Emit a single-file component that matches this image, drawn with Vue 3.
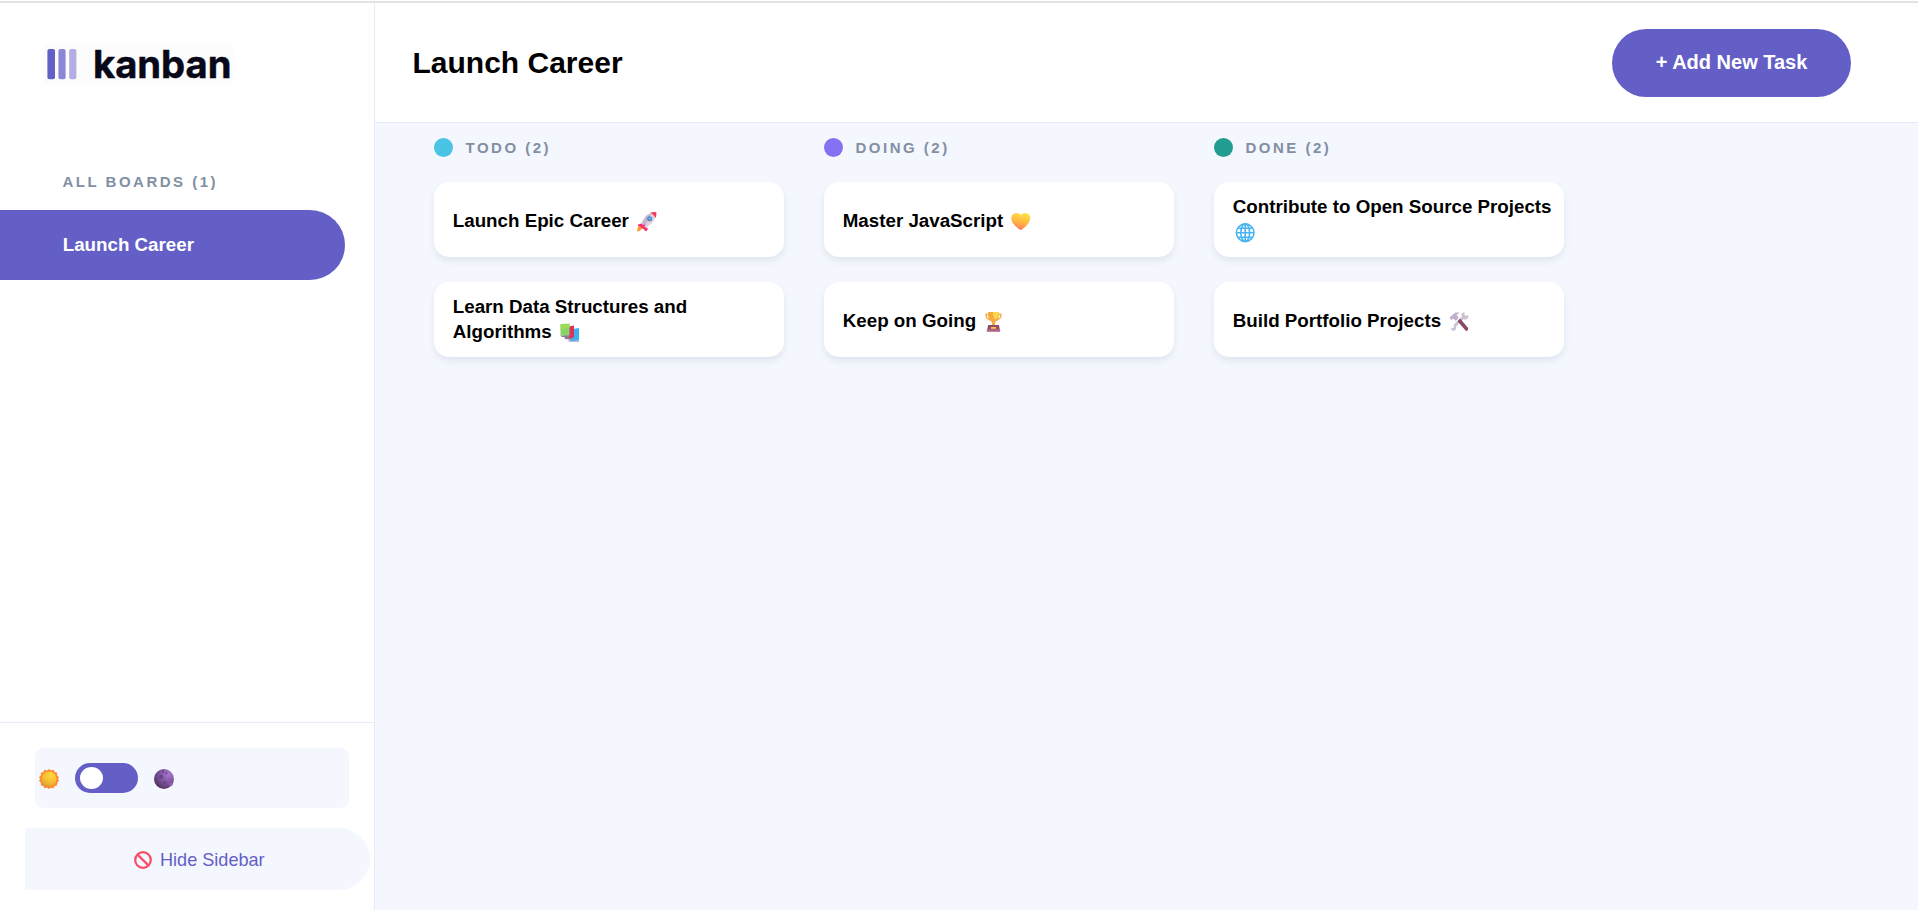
<script setup>
const boards = ['Launch Career']
const columns = [
  { name: 'TODO', color: '#49c4e5', tasks: [
    { title: 'Launch Epic Career', icon: 'rocket' },
    { title: 'Learn Data Structures and Algorithms', icon: 'books', wide: true }
  ] },
  { name: 'DOING', color: '#8471f2', tasks: [
    { title: 'Master JavaScript', icon: 'heart' },
    { title: 'Keep on Going', icon: 'trophy' }
  ] },
  { name: 'DONE', color: '#219c90', tasks: [
    { title: 'Contribute to Open Source Projects', icon: 'globe', wide: true },
    { title: 'Build Portfolio Projects', icon: 'tools' }
  ] }
]
</script>

<template>
  <div class="app">
    <div class="topline"></div>
    <div class="body">
      <aside class="sidebar">
        <svg class="logo" width="190" height="41" viewBox="0 0 190 41">
          <rect width="190" height="41" fill="#fcfcfc" />
          <rect x="4.4" y="5" width="7.6" height="30.3" rx="2" fill="#635fc7" />
          <rect x="15.4" y="5" width="7.2" height="30.3" rx="2" fill="#8b87d6" />
          <rect x="26.2" y="5" width="7.2" height="30.3" rx="2" fill="#b1aee3" />
          <text class="wordmark" x="50" y="33.600" textLength="138.500" lengthAdjust="spacingAndGlyphs">kanban</text>
        </svg>
        <h3 class="label boards-label">ALL BOARDS ({{ boards.length }})</h3>
        <nav>
          <button v-for="b in boards" :key="b" class="board">{{ b }}</button>
        </nav>
        <div class="side-bottom">
          <div class="theme">
            <svg class="sun" width="20" height="20" viewBox="0 0 20 20">
              <defs>
                <radialGradient id="sun" cx=".65" cy=".2" r=".9"><stop offset="0" stop-color="#ffd93f" /><stop offset=".6" stop-color="#f5bb32" /><stop offset="1" stop-color="#cf9a38" /></radialGradient>
              </defs>
              <path fill="#ff8b2e" d="M10 0l2 1.5 2.6-.7 1 2.2 2.5.7v2.5L20 8.3 19.1 10l.9 2-1.8 1.8-.1 2.6-2.5.7-1.2 2.2-2.5-.6L10 20l-2-1.3-2.5.6-1.1-2.2-2.5-.7-.1-2.6L.1 12l.9-2-.9-1.8 1.8-2V3.700l2.5-.7 1-2.2 2.600.7z" />
              <circle cx="10" cy="10" r="7.6" fill="url(#sun)" />
            </svg>
            <div class="switch"><span class="knob"></span></div>
            <svg class="moon" width="20" height="20" viewBox="0 0 20 20">
              <defs>
                <radialGradient id="moon" cx=".72" cy=".25" r=".85"><stop offset="0" stop-color="#a878cd" /><stop offset=".5" stop-color="#8055a2" /><stop offset="1" stop-color="#4c3158" /></radialGradient>
              </defs>
              <circle cx="10" cy="10" r="10" fill="url(#moon)" />
              <g fill="#6a4389"><circle cx="7.300" cy="7.700" r="2" /><circle cx="10.700" cy="13.700" r="1.8" /><circle cx="9" cy="2.500" r="1.300" /><circle cx="12.500" cy="4.300" r="1" /></g>
              <circle cx="17" cy="15.500" r="1.700" fill="#9562b3" />
            </svg>
          </div>
          <button class="hide">
            <svg width="18" height="18" viewBox="0 0 18 18" fill="none" stroke="#fb4b64" stroke-width="2.2"><circle cx="9" cy="9" r="7.800" /><path d="M3.600 3.600l10.800 10.800" /></svg>
            <span>Hide Sidebar</span>
          </button>
        </div>
      </aside>
      <main class="main">
        <header class="header">
          <h1>{{ boards[0] }}</h1>
          <button class="add">+ Add New Task</button>
        </header>
        <section class="columns">
          <div v-for="c in columns" :key="c.name" class="column">
            <div class="col-head">
              <span class="dot" :style="{ background: c.color }"></span>
              <h4 class="label">{{ c.name }} ({{ c.tasks.length }})</h4>
            </div>
            <article v-for="t in c.tasks" :key="t.title" class="card" :class="{ wide: t.wide }">
              <p>{{ t.title }}&#32;<svg class="emoji" width="26" height="20" viewBox="-3 0 26 20">
                  <g v-if="t.icon === 'rocket'">
                    <path d="M1 12.500l5-1.500 5 6-2 2.500-3-3-4 .5z" fill="#f52f6c" />
                    <path d="M4 11l4-6q4-4 10-4.500 1.500 5.500-3 10.500l-6 5z" fill="#dcd1e2" />
                    <path d="M5 11l4-7q3-2 6-3l-7 13z" fill="#c3b5cd" />
                    <path d="M13 .8q3.500-1.200 6.300-.6.500 3-1 6-1-3.500-5.300-5.400z" fill="#f8375b" />
                    <circle cx="12.700" cy="6.700" r="2.500" fill="#5b75b1" /><circle cx="12.900" cy="6.500" r="1.500" fill="#4fb8fa" />
                    <path d="M4.500 13l4-.5-2.500 4z" fill="#f5357b" />
                    <path d="M.2 19.500q-.5-4 2.500-5.500l2.300 2q-1 3-4.800 3.500z" fill="#ff962e" />
                  </g>
                  <g v-else-if="t.icon === 'books'">
                    <path d="M8 16l11-1v4H9z" fill="#b8b5dd" /><path d="M10.500 6.500l8.500-1.500v12l-8.500 1z" fill="#3cb1f1" />
                    <path d="M4 12.500h8v3.500l-7 .3z" fill="#a3718e" /><path d="M9 3.500l5-1v12l-4 .5-1-2z" fill="#df315a" />
                    <path d="M.5 1L9.500.8v11.500l-9 .5z" fill="#85d56a" /><path d="M.5 1L9.500.8v4l-9 2z" fill="#9bdb55" />
                    <path d="M.5 12.800l9-.5-.7 1.700H2z" fill="#8e7994" />
                  </g>
                  <g v-else-if="t.icon === 'heart'">
                    <defs><linearGradient id="heart" x1=".7" y1="0" x2=".4" y2="1"><stop offset="0" stop-color="#ffe34b" /><stop offset=".55" stop-color="#ffb63f" /><stop offset="1" stop-color="#ff7467" /></linearGradient></defs>
                    <path fill="url(#heart)" d="M9.800 3Q11.500 1 14.500 1 19 1.500 19.300 6.300 19 12.500 9.800 18.300.6 12.500.3 6.300.6 1.500 5.100 1 8.100 1 9.800 3z" />
                  </g>
                  <g v-else-if="t.icon === 'trophy'">
                    <path d="M5 2.500H2q0 5 5 5.500M13 2.500h4q0 5-5 5.500" fill="none" stroke="#f3ae42" stroke-width="1.400" />
                    <path d="M4.300 0h10.400q.8 8-3.200 9.500l-.8 3.500H8.300l-.8-3.500Q3.500 8 4.300 0z" fill="#f5a940" />
                    <path d="M9 0h5.700q0 5-3 7.500Q9 7 9 0z" fill="#fbd74c" />
                    <path d="M4 13h11l1 6.500H3z" fill="#914d64" /><path d="M3 17h13l.3 2.500H2.700z" fill="#ad6983" /><path d="M7 15h5v1.800H7z" fill="#fac64a" />
                  </g>
                  <g v-else-if="t.icon === 'globe'" transform="translate(-.5)" fill="none" stroke="#49b4ef" stroke-width="1.600">
                    <circle cx="9.700" cy="9.700" r="8.800" /><ellipse cx="9.700" cy="9.700" rx="4.400" ry="8.800" /><path d="M9.700 1v17.500M1 9.700h17.500M2.500 5.200h14.400M2.500 14.200h14.400" />
                  </g>
                  <g v-else>
                    <path d="M4 19q-2-1-2-3.500l2 .8 1.400-1.500-1-1.800 8.300-8-.2-3.500L15.500 0v3l1.600.8L19.300 3q.7 3-2.300 4.500l-2.500-.2L7 14.500q.5 4-3 4.500z" fill="#cdc0d5" />
                    <path d="M.5 5.500L6.500.4l4 .2-3 2.300 2.300 3.200-3 2.900-2.300-2.500L2.400 8z" fill="#bfb1cb" />
                    <path d="M8.500 9.200l2.600-2.600 8 9.500q.5 2.400-1.900 3.100z" fill="#884a60" />
                  </g>
                </svg></p>
            </article>
          </div>
        </section>
      </main>
    </div>
  </div>
</template>

<style>
body { margin: 0; overflow: hidden; }
</style>

<style scoped>
.app, .app * { box-sizing: border-box; }
.app {
  height: 910px;
  padding-top: 1px;
  background: #fff;
  color: #000;
  font-family: "Liberation Sans", Arial, sans-serif;
  display: flex;
  flex-direction: column;
}
h1, h3, h4, p { margin: 0; }
button { border: 0; padding: 0; font-family: inherit; cursor: pointer; }
.topline { height: 2px; background: #e2e4e2; }
.body { flex: 1; display: flex; min-height: 0; }
.sidebar {
  width: 375px;
  border-right: 1px solid #e4ebfa;
  display: flex;
  flex-direction: column;
  align-items: stretch;
}
.logo { margin: 41px 0 0 43px; flex: none; overflow: visible; }
.wordmark { font: 700 38px Inter, sans-serif; fill: #080819; stroke: #080819; stroke-width: .5; stroke-linejoin: round; }
.label {
  font-size: 15px;
  line-height: 20px;
  font-weight: 700;
  letter-spacing: 2.5px;
  color: #828fa3;
  white-space: nowrap;
}
.boards-label { margin: 87px 0 18px 62.5px; }
.board {
  display: block;
  width: 345px;
  height: 70px;
  padding: 0 0 1px 62.700px;
  text-align: left;
  border-radius: 0 35px 35px 0;
  background: #635fc7;
  color: #fff;
  font-size: 18.75px;
  font-weight: 700;
}
.side-bottom { margin-top: auto; height: 188px; border-top: 1px solid #e4ebfa; padding-top: 25px; }
.theme {
  margin-left: 35px;
  width: 314px;
  height: 60px;
  border-radius: 8px;
  background: #f4f7fd;
  display: flex;
  align-items: center;
  padding-left: 4px;
}
.sun, .moon { margin-top: 2px; }
.switch {
  width: 63px;
  height: 30px;
  margin: 0 16px 0 16px;
  border-radius: 15px;
  background: #635fc7;
  padding: 4px 5px;
}
.knob { display: block; width: 23px; height: 22px; border-radius: 50%; background: #fff; }
.hide {
  margin: 20px 0 0 25px;
  width: 345px;
  height: 62px;
  border-radius: 0 31px 31px 0;
  background: #f4f7fd;
  color: #635fc7;
  font-size: 18.1px;
  display: flex;
  align-items: center;
  padding: 1px 0 0 109px;
  gap: 8px;
}
.hide span { padding-top: 1px; }
.main { flex: 1; background: #f4f7fd; }
.header {
  height: 120px;
  background: #fff;
  border-bottom: 1px solid #e4ebfa;
  display: flex;
  align-items: center;
  justify-content: space-between;
  padding: 0 67px 0 37.500px;
}
.header h1 { font-size: 30px; line-height: 38px; font-weight: 700; }
.add {
  width: 239px;
  height: 68px;
  border-radius: 34px;
  background: #635fc7;
  color: #fff;
  font-size: 20px;
  font-weight: 700;
}
.columns { display: flex; gap: 40px; padding: 15px 0 0 59px; }
.column { width: 350px; }
.col-head { display: flex; align-items: center; gap: 12.500px; height: 19px; margin-bottom: 25px; }
.dot { width: 19px; height: 19px; border-radius: 50%; }
.card {
  height: 75px;
  margin-bottom: 25px;
  padding: 1px 12px 0 18.750px;
  border-radius: 15px;
  background: #fff;
  box-shadow: 0 4px 6px rgba(54, 78, 126, .1);
  display: flex;
  align-items: center;
  font-size: 18.75px;
  line-height: 25px;
  font-weight: 700;
}
.card.wide { padding-top: 0; padding-bottom: 2px; }
.emoji { vertical-align: -2px; margin: -3px 0; }
</style>
